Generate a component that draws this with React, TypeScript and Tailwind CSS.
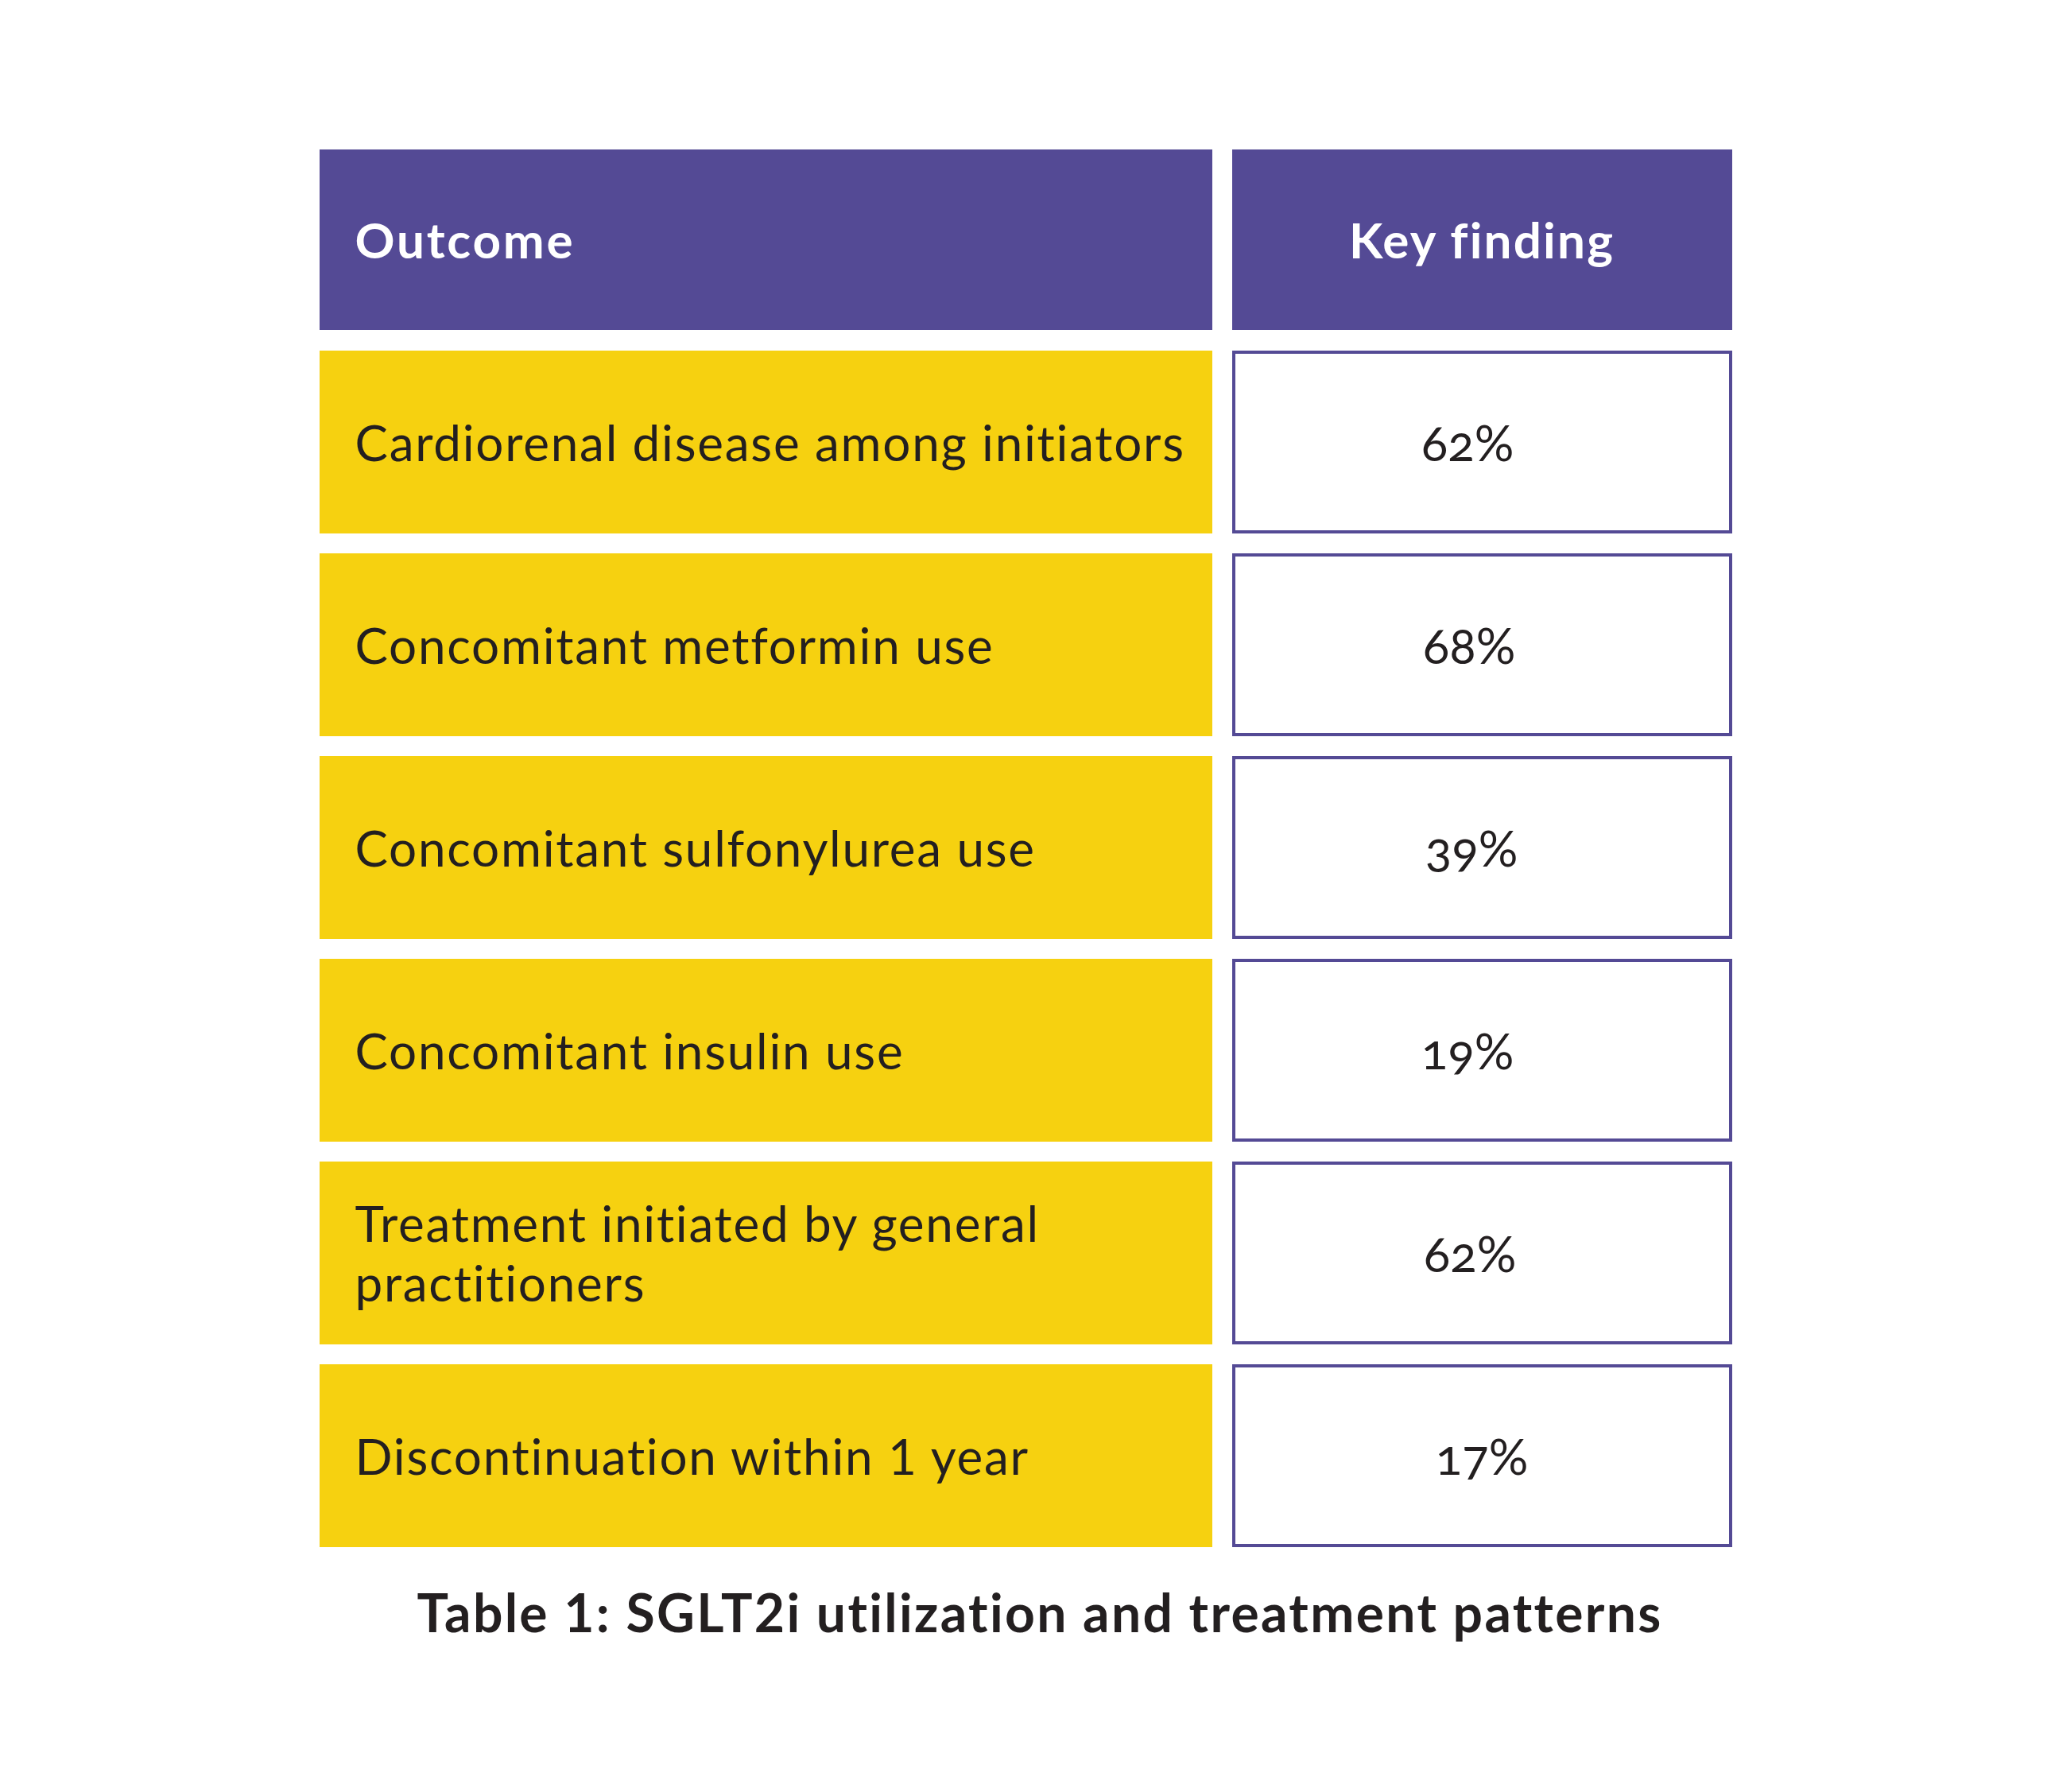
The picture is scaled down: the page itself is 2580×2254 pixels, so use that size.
import React from "react";

const rows: { label: string; value: string; valueClass: string }[] = [
  { label: "Cardiorenal disease among initiators", value: "62%", valueClass: "pr-[36px]" },
  { label: "Concomitant metformin use", value: "68%", valueClass: "pr-[32px]" },
  { label: "Concomitant sulfonylurea use", value: "39%", valueClass: "pr-[26px]" },
  { label: "Concomitant insulin use", value: "19%", valueClass: "pr-[36px]" },
  { label: "Treatment initiated by general practitioners", value: "62%", valueClass: "pr-[30px]" },
  { label: "Discontinuation within 1 year", value: "17%", valueClass: "pr-0" },
];

export default function App() {
  return (
    <div
      className="min-h-[2254px] w-full bg-white pt-[188px] text-[#231f20]"
      style={{ fontFamily: "Lato, 'Open Sans', 'Liberation Sans', sans-serif" }}
    >
      <div className="mx-auto w-[1777px]">
        <div className="grid grid-cols-[1123px_629px] gap-x-[25px]">
          <div className="flex h-[227px] items-center bg-[#544a95] pl-[45px] text-[62px] font-bold tracking-[0.045em] text-white">
            Outcome
          </div>
          <div className="flex h-[227px] items-center justify-center bg-[#544a95] text-[62px] font-bold tracking-[0.035em] text-white">
            Key finding
          </div>
        </div>
        <div className="mt-[26px] flex flex-col gap-y-[25px]">
          {rows.map((r) => (
            <div key={r.label} className="grid grid-cols-[1123px_629px] gap-x-[25px]">
              <div className="flex h-[230px] items-center bg-[#f6d110] pl-[45px] pr-[10px] text-[62px] leading-[75px] font-normal tracking-[0.028em]">
                {r.label}
              </div>
              <div
                className={
                  "flex h-[230px] items-center justify-center border-[4px] border-[#544a95] bg-white text-[62px] oldstyle-nums " +
                  r.valueClass
                }
              >
                {r.value}
              </div>
            </div>
          ))}
        </div>
        <div className="mt-[44px] pl-[36px] text-center text-[66px] leading-[75px] font-bold tracking-[0.035em]">
          Table 1: SGLT2i utilization and treatment patterns
        </div>
      </div>
    </div>
  );
}
